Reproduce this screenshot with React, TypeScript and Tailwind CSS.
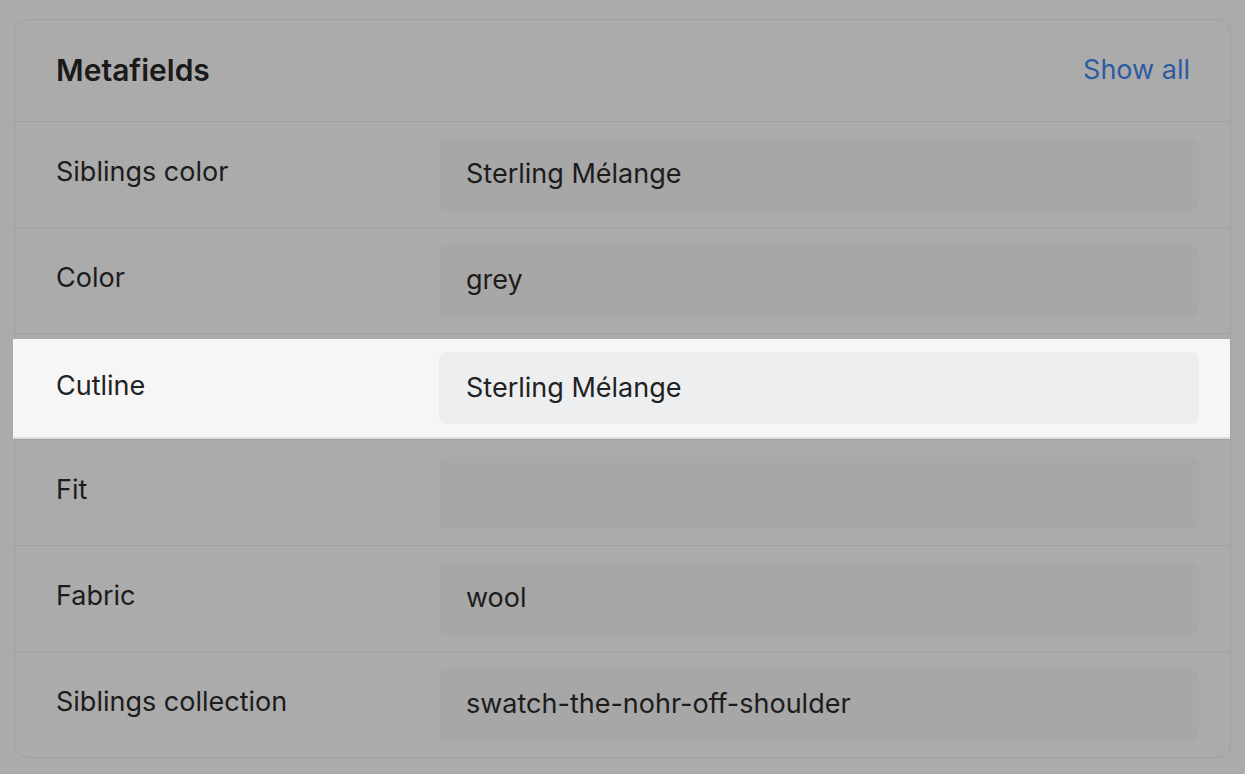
const ROWS = [
  { label: 'Siblings color', value: 'Sterling Mélange' },
  { label: 'Color', value: 'grey' },
  { label: 'Cutline', value: 'Sterling Mélange', active: true },
  { label: 'Fit', value: '' },
  { label: 'Fabric', value: 'wool' },
  { label: 'Siblings collection', value: 'swatch-the-nohr-off-shoulder' },
];

function Row({ label, value, active }: { label: string; value: string; active?: boolean }) {
  if (active) {
    return (
      <div className="h-[106px] border-t border-[#a1a1a1] pt-[5px] flex flex-col">
        <div className="-ml-[2px] flex-1 flex items-center bg-[#f6f6f6] border-b-2 border-[#dcdcdc] pl-[43px] pr-[31px]">
          <div className="w-[383px] text-[27px] text-[#202223] -mt-[4px]">{label}</div>
          <div className="flex-1 h-[72px] rounded-[8px] bg-[#edeef0] flex items-center px-[27px] text-[27px] text-[#202223]">
            {value}
          </div>
        </div>
      </div>
    );
  }
  return (
    <div className="h-[106px] border-t border-[#a1a1a1] flex items-center pl-[41px] pr-[31px]">
      <div className="w-[383px] text-[27px] text-[#1c1c1c] -mt-[4px]">{label}</div>
      <div className="flex-1 h-[72px] rounded-[8px] bg-[#a6a7a6] flex items-center px-[27px] text-[27px] text-[#1c1c1c]">
        {value}
      </div>
    </div>
  );
}

export default function App() {
  return (
    <div
      className="min-h-screen bg-[#ababab] pt-[19px] pl-[14px] pr-[14px] pb-[17px]"
      style={{ fontFamily: 'Inter, "Noto Sans", sans-serif' }}
    >
      <div className="border border-[#a0a0a0] rounded-[14px]">
        <div className="h-[101px] flex items-center justify-between pl-[41px] pr-[40px]">
          <h2 className="text-[30px] font-semibold text-[#1a1a1a]">Metafields</h2>
          <a className="text-[27px] text-[#2c5ba1]">Show all</a>
        </div>
        {ROWS.map((r) => (
          <Row key={r.label} {...r} />
        ))}
      </div>
    </div>
  );
}
